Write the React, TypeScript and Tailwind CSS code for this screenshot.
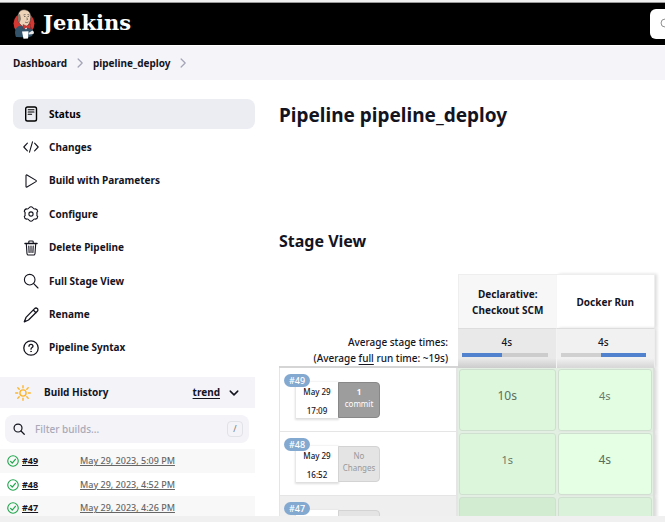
import React from "react";

type IconProps = { children: React.ReactNode; className?: string };

function Icon({ children, className = "size-4" }: IconProps) {
  return (
    <svg
      viewBox="0 0 16 16"
      className={`shrink-0 ${className}`}
      fill="none"
      stroke="currentColor"
      strokeWidth="1.1"
      strokeLinecap="round"
      strokeLinejoin="round"
      aria-hidden="true"
    >
      {children}
    </svg>
  );
}

const searchShape = (
  <>
    <circle cx="6.7" cy="6.7" r="5.3" />
    <path d="M10.7 10.7 15 15" />
  </>
);

const tasks = [
  {
    label: "Status",
    icon: (
      <>
        <rect x="2.7" y="1" width="10.8" height="14" rx="1.8" strokeWidth="1.4" />
        <path d="M5.2 3.8h5.8M5.2 6h5.8M5.2 8.2h3.4" />
      </>
    ),
  },
  {
    label: "Changes",
    icon: <path d="M4.4 4.2.8 8l3.6 3.8M11.6 4.2 15.2 8l-3.6 3.8M9.5 2.8l-3 10.4" />,
  },
  {
    label: "Build with Parameters",
    icon: <path d="M3 2.6v10.8c0 .7.5.9 1 .6l9-5.4c.5-.3.5-.9 0-1.2L4 2c-.5-.3-1-.1-1 .6Z" />,
  },
  {
    label: "Configure",
    icon: (
      <>
        <circle cx="8" cy="8" r="2.1" />
        <path d="M6.2 1.600Q8 0 9.800 1.600 10.600 3.400 12.400 2.900 14.600 3.200 14.700 5.500 13.200 6.800 14.200 8 13.200 9.200 14.700 10.500 14.600 12.800 12.400 13.100 10.600 12.600 9.800 14.400 8 16 6.200 14.400 5.400 12.600 3.600 13.100 1.400 12.800 1.300 10.500 2.800 9.200 1.800 8 2.800 6.800 1.300 5.500 1.400 3.200 3.600 2.900 5.400 3.400 6.200 1.600Z" />
      </>
    ),
  },
  {
    label: "Delete Pipeline",
    icon: (
      <>
        <path d="M2 3.5h12" strokeWidth="1.5" />
        <path d="M3.3 3.8l.7 10c.1.800.5 1.200 1.200 1.200h5.600c.7 0 1.100-.4 1.200-1.200l.7-10M5.800 3.300V1.800c0-.5.300-.8.800-.8h2.800c.5 0 .8.300.8.800v1.500M8 6v6.500M5.800 6l.3 6.500M10.200 6l-.3 6.500" />
      </>
    ),
  },
  { label: "Full Stage View", icon: searchShape },
  {
    label: "Rename",
    icon: (
      <path d="M11.600 1.600c.8-.8 2-.8 2.700 0 .8.700.8 1.900 0 2.700L5.500 13 1.300 14.800 3 10.400ZM10.500 3.200l2.500 2.500" strokeWidth="1.3" />
    ),
  },
  {
    label: "Pipeline Syntax",
    icon: (
      <>
        <circle cx="8" cy="8" r="7.2" strokeWidth="1.3" />
        <path d="M6 6.300c0-2.600 4-2.600 4 0C10 7.600 8 7.600 8 9.200" strokeWidth="1.3" />
        <circle cx="8" cy="11.4" r=".5" fill="currentColor" strokeWidth=".5" />
      </>
    ),
  },
];

const history = [
  { id: "#49", date: "May 29, 2023, 5:09 PM" },
  { id: "#48", date: "May 29, 2023, 4:52 PM" },
  { id: "#47", date: "May 29, 2023, 4:26 PM" },
];

const runs = [
  { id: "#49", day: "May 29", time: "17:09", changes: ["1", "commit"], stages: ["10s", "4s"], big: [true, false] },
  { id: "#48", day: "May 29", time: "16:52", changes: ["No", "Changes"], stages: ["1s", "4s"], big: [false, true] },
  { id: "#47", day: "", time: "", changes: ["No", ""], stages: ["", ""], big: [false, false] },
];

function Butler() {
  return (
    <svg viewBox="0 0 22 30" className="h-[30px] w-[22px] shrink-0" aria-hidden="true">
      <ellipse cx="11" cy="14.5" rx="10.5" ry="10.5" fill="#d33833" />
      <path d="M3 28C1 23 2 19 6 17l9-1c5 2 6 7 4 11l-4 1.500Z" fill="#33536a" />
      <path d="M5 6C6 1.500 9 0 13 1c4 1 5.500 5 4.500 9-.5 5-3 7.500-6 7.500S5 14 5 10Z" fill="#eed3b8" stroke="#312f2f" strokeWidth=".6" />
      <path d="M5 6c-1 3 0 6 1.500 8L8 10 7 5Z" fill="#8a7a6b" />
      <path d="M11 7.500h1.500M14.500 7.500H16M12 13c1 .8 2.500.8 3.500-.2M10.500 6l2-.5M14.500 5.500l2 .5M13.800 8.500l.7 2-1 .3" stroke="#312f2f" strokeWidth=".6" fill="none" />
      <path d="M9 16.500l4 4 3-4Z" fill="#fff" />
      <path d="M10 15.500l3.500 1.500L17.500 15v5l-4-1.500L10 20Z" fill="#d33833" stroke="#7c1c1a" strokeWidth=".4" />
      <path d="M9 22.500l6.500-.3-.5 7.300-4.500.3Z" fill="#fff" />
      <path d="M15.500 24l4-2.500 1.500 1.500-.5 2-4.500.5Z" fill="#e8e8e8" />
    </svg>
  );
}

function Crumb({ label }: { label: string }) {
  return (
    <li className="flex items-center">
      <a href="#" className="font-bold">{label}</a>
      <Icon className="mx-2 size-[10px] text-[#a5a3b8]"><path d="M5 1.500 11.500 8 5 14.500" strokeWidth="2" /></Icon>
    </li>
  );
}

function Header() {
  return (
    <header className="shrink-0">
      <div className="h-[3px] border-b border-[#999] bg-[#f0f0f0]" />
      <div className="flex h-[42px] items-center overflow-hidden bg-black pl-[13px]">
        <a href="#" className="flex items-center gap-2 font-['DejaVu_Serif',serif] text-[21px] font-bold text-white">
          <Butler />
          <span className="-mt-[3px]">Jenkins</span>
        </a>
        <label className="-mr-[200px] ml-auto flex h-[30px] w-[215px] shrink-0 items-center gap-2 rounded-md bg-white pl-[10px] text-[#777]">
          <Icon className="size-3">{searchShape}</Icon>
          <input type="search" aria-label="Search" className="w-full bg-transparent text-xs outline-none" />
        </label>
      </div>
      <nav aria-label="Breadcrumb" className="mt-px bg-[#f5f5f9] pl-[13px]">
        <ol className="flex h-[34px] items-center text-[10px]">
          <Crumb label="Dashboard" />
          <Crumb label="pipeline_deploy" />
        </ol>
      </nav>
    </header>
  );
}

function Sidebar() {
  return (
    <aside className="w-[255px] shrink-0 pt-[19px]">
      <nav aria-label="Tasks" className="flex h-[264px] flex-col justify-between pl-[13px]">
        {tasks.map((task, i) => (
          <a
            key={task.label}
            href="#"
            className={`flex h-[30px] items-center gap-[10px] rounded-lg pl-[10px] text-[10px] font-bold ${i === 0 ? "bg-[#ecedf3] text-black" : ""}`}
          >
            <Icon>{task.icon}</Icon>
            {task.label}
          </a>
        ))}
      </nav>
      <section className="mt-[14px]">
        <div className="flex h-[31px] items-center bg-[#f3f3f8] pr-[15px] pl-[15px] text-[10px]">
          <Icon className="size-4 text-[#fdb52d]">
            <circle cx="8" cy="8" r="3.1" strokeWidth="1.4" />
            <path d="M8 .7v2M8 13.300v2M.7 8h2M13.300 8h2M2.800 2.800l1.400 1.400M11.800 11.800l1.400 1.400M2.800 13.200l1.400-1.400M11.800 4.200l1.400-1.400" strokeWidth="1.4" />
          </Icon>
          <h2 className="ml-[13px] font-bold">Build History</h2>
          <a href="#" className="mr-2 ml-auto font-bold underline underline-offset-2">trend</a>
          <button type="button" aria-label="Collapse build history">
            <Icon className="size-3"><path d="M3 5.500 8 10.500l5-5" strokeWidth="2" /></Icon>
          </button>
        </div>
        <label className="mr-[6px] ml-[5px] mt-[7px] flex h-[28px] items-center gap-[10px] rounded-lg bg-[#f3f3f8] pr-[6px] pl-2">
          <Icon className="size-3"><g strokeWidth="1.6">{searchShape}</g></Icon>
          <input
            type="search"
            aria-label="Filter builds"
            placeholder="Filter builds..."
            className="min-w-0 flex-1 bg-transparent text-[10px] font-medium outline-none placeholder:text-[#a9a9b8]"
          />
          <kbd className="flex h-4 w-4 items-center justify-center rounded-sm border border-[#e1e1e8] font-['Noto_Sans',sans-serif] text-[9px] text-[#777]">/</kbd>
        </label>
        <table className="mt-[6px] w-full text-left text-[9px]">
          <tbody>
            {history.map((build) => (
              <tr key={build.id} className="odd:h-6 odd:bg-[#f8f8f8] even:h-[23px]">
                <td className="w-[80px] pl-[7px]">
                  <a href="#" className="flex items-center gap-[3px] font-bold underline">
                    <Icon className="size-3 text-[#1ea64b]">
                      <circle cx="8" cy="8" r="7" strokeWidth="1.5" />
                      <path d="M4.800 8.500 7 10.700l4.200-5" strokeWidth="1.6" />
                    </Icon>
                    {build.id}
                  </a>
                </td>
                <td>
                  <a href="#" className="font-medium text-[#666] underline">{build.date}</a>
                </td>
              </tr>
            ))}
          </tbody>
        </table>
      </section>
    </aside>
  );
}

function RunLabel({ run }: { run: (typeof runs)[number] }) {
  const hasCommit = run.changes[0] === "1";
  return (
    <div className="relative h-full pt-[14px] pl-4">
      <a
        href="#"
        className="absolute top-[6px] left-[4px] z-10 rounded-full bg-[#84a9d1] px-[5px] text-[9px] leading-[13px] font-medium text-white"
      >
        {run.id}
      </a>
      <div className="flex h-9 text-center">
        <div className="flex w-[42px] flex-col justify-between bg-white pt-1 pb-px text-[8px] leading-[12px] font-medium shadow-[0_1px_2px_1px_#ddd]">
          <span>{run.day}</span>
          <span>{run.time}</span>
        </div>
        <div
          className={`w-[42px] rounded-r border pt-[3px] text-[8px] leading-[12px] ${hasCommit ? "border-[#888] bg-[#9d9d9d] text-white" : "border-[#d3d3d3] bg-[#e4e4e4] text-[#999]"}`}
        >
          <div className={hasCommit ? "font-bold" : ""}>{run.changes[0]}</div>
          <div>{run.changes[1]}</div>
        </div>
      </div>
    </div>
  );
}

function StageView() {
  return (
    <table className="w-full table-fixed border-separate border-spacing-0 text-center">
      <colgroup>
        <col className="w-[179px]" />
        <col />
        <col />
      </colgroup>
      <thead>
        <tr className="h-[54px] text-[10px] leading-4">
          <td />
          <th scope="col" className="border-t border-l border-[#eee] bg-[#f7f7f7] font-bold">
            Declarative:
            <br />
            Checkout SCM
          </th>
          <th scope="col" className="border-t border-r border-[#eee] font-bold shadow-[2px_0_3px_#ddd]">Docker Run</th>
        </tr>
        <tr className="h-[39px] text-[10px] leading-4">
          <th scope="row" className="border-b-2 border-[#d5d5d5] pt-[6px] pr-[10px] text-right font-medium whitespace-nowrap">
            Average stage times:
            <br />
            (Average <u className="underline-offset-2">full</u> run time: ~19s)
          </th>
          <td className="border-t border-r border-t-[#ddd] border-r-[#f4f4f4] bg-linear-to-b from-[#e9e9e9] from-75% to-[#ccc] px-1 align-top font-medium">
            <div className="pt-[5px]">4s</div>
            <div className="mt-[3px] mr-1 h-1 bg-[#ccc]">
              <div className="h-full w-[47%] bg-[#5082ce]" />
            </div>
          </td>
          <td className="border-t border-r border-t-[#ddd] border-r-[#eee] bg-linear-to-b from-[#f1f1f1] from-75% to-[#d5d5d5] pr-2 pl-1 align-top font-medium shadow-[2px_0_3px_#ddd]">
            <div className="pt-[5px]">4s</div>
            <div className="mt-[3px] h-1 bg-[#d0d0d0]">
              <div className="ml-auto h-full w-[53%] bg-[#5082ce]" />
            </div>
          </td>
        </tr>
      </thead>
      <tbody>
        {runs.map((run, i) => (
          <tr key={run.id} className={`h-16 ${i === 2 ? "bg-[#efefef]" : "bg-white"}`}>
            <th scope="row" className="h-16 border-r-2 border-b border-l border-[#e5e5e5] p-0 text-left font-normal">
              <RunLabel run={run} />
            </th>
            {run.stages.map((duration, j) => (
              <td
                key={j}
                className={`h-16 bg-[#e3efe3] p-px ${j === 1 ? "border-r-2 border-[#ddd] shadow-[2px_0_3px_#ddd]" : ""}`}
              >
                <div
                  className={`flex h-full items-center justify-center rounded-[3px] border border-[#cfdfcf] pb-2 text-[#5b6e5c] ${run.big[j] ? "text-[12px]" : "text-[11px] opacity-90"} ${i === 2 ? (j === 0 ? "bg-[#d0ecd0]" : "bg-[#d8f3d8]") : j === 0 ? "bg-[#dcf7dc]" : "bg-[#e4ffe4]"}`}
                >
                  {duration}
                </div>
              </td>
            ))}
          </tr>
        ))}
      </tbody>
    </table>
  );
}

export default function App() {
  return (
    <div className="flex h-screen flex-col overflow-hidden bg-white font-['Noto_Sans',sans-serif] text-[#14141f]">
      <Header />
      <div className="flex min-h-0 flex-1 gap-6 overflow-hidden">
        <Sidebar />
        <main className="min-w-0 flex-1 pt-[21px] pr-[10px]">
          <h1 className="text-[19px] leading-7 font-bold">Pipeline pipeline_deploy</h1>
          <h2 className="mt-[100px] mb-[21px] text-[16px] leading-6 font-bold">Stage View</h2>
          <StageView />
        </main>
      </div>
      <footer className="h-[6px] shrink-0 bg-[#f0f0f0]" />
    </div>
  );
}
